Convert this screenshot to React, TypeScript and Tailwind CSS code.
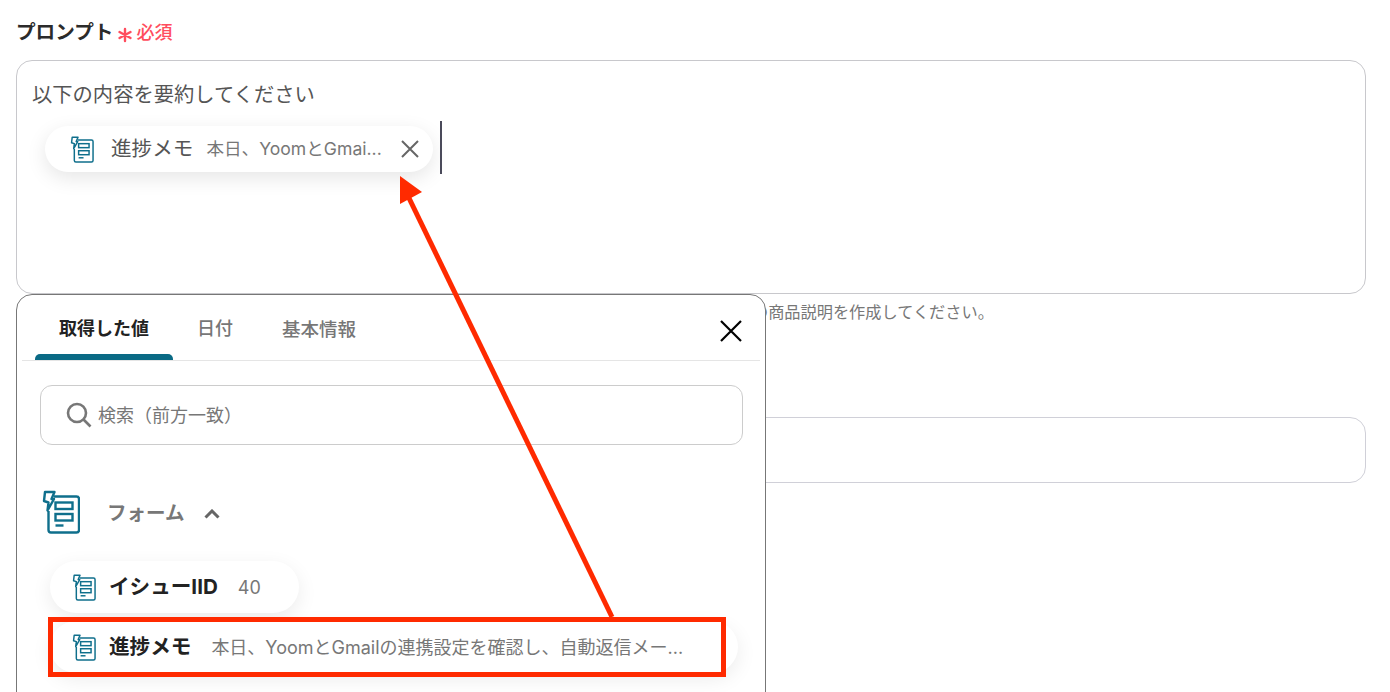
import React from "react";

const FONT = "font-['Inter','Noto_Sans_CJK_JP',sans-serif]";

function FormIcon({ className }: { className: string }) {
  return (
    <svg viewBox="0 0 38 44" fill="none" stroke="#0f6f8c" strokeWidth="2.4" className={className}>
      <path d="M12 6.5H34.5Q37 6.5 37 9V40Q37 42.5 34.5 42.5H9Q6.5 42.5 6.5 40V21" strokeLinejoin="round" />
      <path d="M3 2H12.5L9.5 9H12L5.5 20.5L6.5 12.5L2 11Z" strokeLinejoin="round" fill="#fff" />
      <rect x="13.5" y="12.5" width="17" height="6.5" />
      <rect x="13.5" y="24" width="17" height="6.5" />
      <path d="M13.5 35.5H21.5" />
    </svg>
  );
}

function Chip({ title, value, wide }: { title: string; value: string; wide?: boolean }) {
  return (
    <div
      className={`flex h-[52px] items-center rounded-full bg-white pl-[22px] shadow-[0_6px_20px_rgba(0,0,0,0.08)] ${wide ? "w-[688px]" : "w-[249px]"}`}
    >
      <FormIcon className="h-[27px] w-[24px] shrink-0" />
      <span className="ml-[13px] pt-[1px] text-[20.6px] font-bold text-[#222]">{title}</span>
      <span className="ml-[20px] whitespace-nowrap pt-[1px] text-[18px] text-[#777]">{value}</span>
    </div>
  );
}

export default function App() {
  return (
    <div className={`relative h-[692px] w-[1390px] overflow-hidden bg-white px-4 ${FONT}`}>
      <div className="flex h-[60px] items-center pt-[5px]">
        <span className="text-[19.6px] font-bold leading-none text-[#2b2b2b]">プロンプト</span>
        <svg viewBox="0 0 16 16" className="ml-[4px] mt-[4px] h-[16px] w-[16px]" stroke="#ff4d5e" strokeWidth="2.4" strokeLinecap="round">
          <path d="M8 2V14M2.5 5L13.5 11M13.5 5L2.5 11" />
        </svg>
        <span className="ml-[3px] text-[18px] font-medium leading-none text-[#ff4d5e]">必須</span>
      </div>

      <div className="h-[234px] w-[1350px] rounded-[16px] border border-[#c8c8cc] pl-[15px] pt-[20px]">
        <p className="text-[20.3px] leading-[28px] text-[#555]">以下の内容を要約してください</p>
        <div className="mt-[12px] flex items-start">
          <div className="ml-[13px] mt-[5px] flex h-[46px] w-[388px] items-center rounded-full bg-white pl-[25px] shadow-[0_6px_20px_rgba(0,0,0,0.1)]">
            <FormIcon className="h-[27px] w-[24px] shrink-0" />
            <span className="ml-[17px] text-[20.6px] text-[#555]">進捗メモ</span>
            <span className="ml-[13px] whitespace-nowrap text-[17.6px] text-[#777]">本日、YoomとGmai...</span>
            <svg viewBox="0 0 18 18" className="ml-[19px] h-[18px] w-[18px]" stroke="#666" strokeWidth="2">
              <path d="M1 1L17 17M17 1L1 17" />
            </svg>
          </div>
          <div className="ml-[7px] h-[53px] w-[2px] bg-[#4a4a5a]" />
        </div>
      </div>

      <p className="mt-[8px] pl-[736px] text-[16.2px] leading-[20px] text-[#777]">の商品説明を作成してください。</p>

      <div className="mt-[95px] h-[66px] w-[1350px] rounded-[16px] border border-[#d0d0d8]" />

      <div className="absolute left-[16px] top-[294px] h-[420px] w-[750px] rounded-[16px] border border-[#777] bg-white">
        <div className="relative mx-[5px] flex h-[66px] border-b border-[#e5e5e5]">
          <div className="relative ml-[13px] w-[138px] pt-[19px] text-center text-[18px] font-bold leading-[30px] text-[#222]">
            取得した値
            <div className="absolute bottom-0 left-0 h-[6px] w-[138px] rounded-t-[5px] bg-[#0a6a85]" />
          </div>
          <span className="ml-[24px] pt-[19px] text-[18px] font-medium leading-[30px] text-[#777]">日付</span>
          <span className="ml-[49px] pt-[19px] text-[18.5px] font-medium leading-[30px] text-[#777]">基本情報</span>
          <svg viewBox="0 0 22 22" className="absolute left-[698px] top-[25px] h-[22px] w-[22px]" stroke="#000" strokeWidth="2.2">
            <path d="M1 1L21 21M21 1L1 21" />
          </svg>
        </div>

        <div className="ml-[23px] mt-[24px] flex h-[60px] w-[703px] items-center rounded-[12px] border border-[#ccc] pl-[25px]">
          <svg viewBox="0 0 26 26" fill="none" className="h-[26px] w-[26px]" stroke="#777" strokeWidth="2.6">
            <circle cx="11" cy="11" r="9" />
            <path d="M17.5 17.5L24.5 24.5" />
          </svg>
          <span className="ml-[6px] text-[18px] text-[#777]">検索（前方一致）</span>
        </div>

        <div className="ml-[25px] mt-[45px] flex items-center">
          <FormIcon className="h-[44px] w-[38px]" />
          <span className="ml-[27px] pt-[4px] text-[19.5px] font-bold text-[#777]">フォーム</span>
          <svg viewBox="0 0 16 10" fill="none" className="ml-[20px] mt-[4px] h-[10px] w-[16px]" stroke="#666" strokeWidth="3">
            <path d="M1.5 8.5L8 2L14.5 8.5" />
          </svg>
        </div>

        <div className="ml-[33px] mt-[27px] flex flex-col gap-[8px]">
          <Chip title="イシューIID" value="40" />
          <Chip title="進捗メモ" value="本日、YoomとGmailの連携設定を確認し、自動返信メー..." wide />
        </div>
      </div>

      <div className="absolute left-[48px] top-[617px] h-[60px] w-[678px] border-[5px] border-[#ff2a00]" />

      <svg viewBox="0 0 1390 692" className="pointer-events-none absolute left-0 top-0 h-[692px] w-[1390px]">
        <path d="M612 617L408 196" stroke="#ff2a00" strokeWidth="5" />
        <path d="M400 176L400 204L422 192Z" fill="#ff2a00" />
      </svg>
    </div>
  );
}
